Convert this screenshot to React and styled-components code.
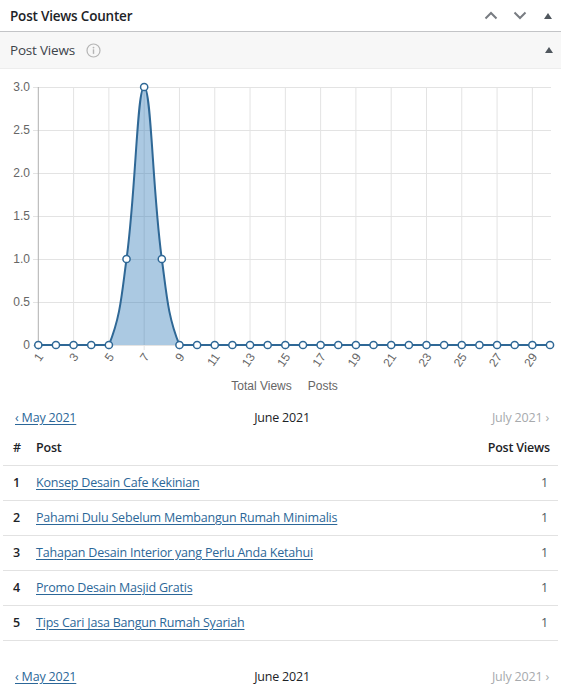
import React from "react";
import styled, { createGlobalStyle } from "styled-components";

const Global = createGlobalStyle`
  html, body { margin: 0; padding: 0; background: #fff; }
  body { font-family: "Open Sans", "Noto Sans", Arial, sans-serif; color: #1d2327; }
  * { box-sizing: border-box; }
`;

const Panel = styled.div`
  width: 561px;
  background: #fff;
`;

const TopBar = styled.div`
  display: flex;
  align-items: center;
  height: 32px;
  padding: 0 0 0 10px;
  border-bottom: 1px solid #c3c4c7;
`;

const Title = styled.h2`
  flex: 1;
  margin: 0;
  font-size: 13.5px;
  font-weight: 600;
  color: #1d2327;
  letter-spacing: -0.2px;
`;

const Tools = styled.div`
  display: flex;
  align-items: center;
`;

const ToolBtn = styled.span`
  display: flex;
  align-items: center;
  justify-content: center;
  width: ${(p) => p.$w || 29}px;
  height: 24px;
  color: #787c82;
`;

const SubBar = styled.div`
  display: flex;
  align-items: center;
  height: 37px;
  padding: 0 4px 0 10px;
  background: #f7f7f7;
  border-bottom: 1px solid #ededed;
`;

const SubTitle = styled.h3`
  margin: 0;
  font-size: 13.5px;
  font-weight: 400;
  color: #3c434a;
  letter-spacing: -0.2px;
`;

const Spacer = styled.div`
  flex: 1;
`;

const InfoIcon = styled.span`
  display: inline-flex;
  margin-left: 11px;
  color: #b5b5b5;
`;

const ChartBox = styled.div`
  display: flex;
  flex-direction: column;
  padding-top: 1px;
`;

const Legend = styled.div`
  display: flex;
  justify-content: center;
  gap: 16px;
  height: 22px;
  align-items: center;
  margin-left: 8px;
  font-family: "Liberation Sans", Arial, sans-serif;
  font-size: 12px;
  color: #666;
`;

const Nav = styled.div`
  display: grid;
  grid-template-columns: 1fr auto 1fr;
  align-items: center;
  height: 20px;
  padding: 0 12px 0 15px;
  margin-top: ${(p) => p.$mt}px;
  font-size: 12.5px;
  letter-spacing: -0.2px;
`;

const NavLink = styled.a`
  color: #2c6798;
  text-decoration: underline;
  text-underline-offset: 2px;
  justify-self: start;
`;

const NavCurrent = styled.span`
  color: #1d2327;
`;

const NavDisabled = styled.span`
  color: #a7aaad;
  justify-self: end;
`;

const Table = styled.table`
  width: 555px;
  margin: 3px 3px 0;
  border-collapse: collapse;
  font-size: 12.5px;
  letter-spacing: -0.2px;
`;

const Th = styled.th`
  text-align: ${(p) => p.$align || "left"};
  font-weight: 600;
  color: #1d2327;
  height: 35px;
  padding: 0 ${(p) => (p.$align === "right" ? 8 : 0)}px 0 ${(p) => p.$pl || 0}px;
  border-bottom: 1px solid #e2e2e2;
  width: ${(p) => (p.$w ? p.$w + "px" : "auto")};
`;

const Td = styled.td`
  height: 35px;
  text-align: ${(p) => p.$align || "left"};
  padding: 0 ${(p) => (p.$align === "right" ? 10 : 0)}px 0 ${(p) => p.$pl || 0}px;
  border-bottom: 1px solid #e2e2e2;
  font-weight: ${(p) => (p.$bold ? 600 : 400)};
  color: ${(p) => (p.$muted ? "#50575e" : "#1d2327")};
`;

const PostLink = styled.a`
  color: #2c6798;
  text-decoration: underline;
  text-underline-offset: 2px;
`;

const posts = [
  "Konsep Desain Cafe Kekinian",
  "Pahami Dulu Sebelum Membangun Rumah Minimalis",
  "Tahapan Desain Interior yang Perlu Anda Ketahui",
  "Promo Desain Masjid Gratis",
  "Tips Cari Jasa Bangun Rumah Syariah",
];

const data = Array.from({ length: 30 }, (_, i) => {
  const d = i + 1;
  if (d === 6 || d === 8) return 1;
  if (d === 7) return 3;
  return 0;
});

const X0 = 38.3;
const DX = 17.645;
const YB = 275;
const YT = 17;
const PER = (YB - YT) / 3;

const px = (i) => X0 + i * DX;
const py = (v) => YB - v * PER;

function buildPath() {
  const pts = data.map((v, i) => ({ x: px(i), y: py(v) }));
  const t = 0.4;
  const cps = pts.map((cur, i) => {
    const prev = pts[i - 1] || cur;
    const next = pts[i + 1] || cur;
    const d01 = Math.hypot(cur.x - prev.x, cur.y - prev.y);
    const d12 = Math.hypot(next.x - cur.x, next.y - cur.y);
    const s01 = d01 / (d01 + d12 || 1);
    const s12 = d12 / (d01 + d12 || 1);
    const fa = t * s01;
    const fb = t * s12;
    const clamp = (y) => Math.max(YT, Math.min(YB, y));
    return {
      p: { x: cur.x - fa * (next.x - prev.x), y: clamp(cur.y - fa * (next.y - prev.y)) },
      n: { x: cur.x + fb * (next.x - prev.x), y: clamp(cur.y + fb * (next.y - prev.y)) },
    };
  });
  let d = `M${pts[0].x},${pts[0].y}`;
  for (let i = 1; i < pts.length; i++) {
    const a = cps[i - 1].n;
    const b = cps[i].p;
    d += ` C${a.x.toFixed(2)},${a.y.toFixed(2)} ${b.x.toFixed(2)},${b.y.toFixed(2)} ${pts[i].x.toFixed(2)},${pts[i].y.toFixed(2)}`;
  }
  return { d, pts };
}

function Chart() {
  const { d, pts } = buildPath();
  const last = pts[pts.length - 1];
  const area = `${d} L${last.x},${YB} L${pts[0].x},${YB} Z`;
  const yTicks = [0, 0.5, 1, 1.5, 2, 2.5, 3];
  const xTicks = [];
  for (let day = 1; day <= 29; day += 2) xTicks.push(day);
  return (
    <svg width="561" height="305" viewBox="0 0 561 305">
      {yTicks.map((v) => (
        <line key={"h" + v} x1="33" x2="551" y1={py(v) + 0.5} y2={py(v) + 0.5} stroke="#e3e3e3" strokeWidth="1" />
      ))}
      {xTicks.map((day) => (
        <line key={"v" + day} x1={px(day - 1)} x2={px(day - 1)} y1={YT} y2={YB + 5} stroke={day === 1 ? "#b0b0b0" : "#e3e3e3"} strokeWidth="1" />
      ))}
      {yTicks.map((v) => (
        <text key={"yl" + v} x="30" y={py(v) + 4} textAnchor="end" fontSize="12" fill="#666" fontFamily="Liberation Sans, Arial, sans-serif">
          {v === 0 ? "0" : v.toFixed(1)}
        </text>
      ))}
      {xTicks.map((day) => {
        const x = px(day - 1) + 3;
        const y = 285;
        return (
          <text key={"xl" + day} x={x} y={y} textAnchor="end" dominantBaseline="middle" fontSize="12" fill="#666" fontFamily="Liberation Sans, Arial, sans-serif" transform={`rotate(-55 ${x} ${y})`}>
            {day}
          </text>
        );
      })}
      <path d={area} fill="rgba(46,120,182,0.4)" />
      <path d={d} fill="none" stroke="#2f6896" strokeWidth="2" />
      {pts.map((p, i) => (
        <circle key={i} cx={p.x} cy={p.y} r="3.6" fill="#fff" stroke="#2f6896" strokeWidth="1.5" />
      ))}
    </svg>
  );
}

const Chevron = ({ up }) => (
  <svg width="14" height="9" viewBox="0 0 14 9">
    <path d={up ? "M1.5 7.5 L7 2 L12.5 7.5" : "M1.5 1.5 L7 7 L12.5 1.5"} fill="none" stroke="currentColor" strokeWidth="2" />
  </svg>
);

const Tri = () => (
  <svg width="8" height="6" viewBox="0 0 8 6">
    <path d="M0 6 L4 0 L8 6 Z" fill="#50575e" />
  </svg>
);

export default function App() {
  return (
    <>
      <Global />
      <Panel>
        <TopBar>
          <Title>Post Views Counter</Title>
          <Tools>
            <ToolBtn $w={28}><Chevron up /></ToolBtn>
            <ToolBtn $w={30}><Chevron /></ToolBtn>
            <ToolBtn $w={26}><Tri /></ToolBtn>
          </Tools>
        </TopBar>
        <SubBar>
          <SubTitle>Post Views</SubTitle>
          <InfoIcon>
            <svg width="15" height="15" viewBox="0 0 15 15">
              <circle cx="7.5" cy="7.5" r="6.5" fill="none" stroke="currentColor" strokeWidth="1.2" />
              <circle cx="7.5" cy="4.6" r="0.9" fill="currentColor" />
              <rect x="6.8" y="6.3" width="1.4" height="4.6" fill="currentColor" />
            </svg>
          </InfoIcon>
          <Spacer />
          <ToolBtn $w={16}><Tri /></ToolBtn>
        </SubBar>
        <ChartBox>
          <Chart />
          <Legend>
            <span>Total Views</span>
            <span>Posts</span>
          </Legend>
        </ChartBox>
        <Nav $mt={10}>
          <NavLink href="#">‹ May 2021</NavLink>
          <NavCurrent>June 2021</NavCurrent>
          <NavDisabled>July 2021 ›</NavDisabled>
        </Nav>
        <Table>
          <thead>
            <tr>
              <Th $w={33} $pl={10}>#</Th>
              <Th>Post</Th>
              <Th $align="right">Post Views</Th>
            </tr>
          </thead>
          <tbody>
            {posts.map((p, i) => (
              <tr key={p}>
                <Td $pl={10} $bold>{i + 1}</Td>
                <Td><PostLink href="#">{p}</PostLink></Td>
                <Td $align="right" $muted>1</Td>
              </tr>
            ))}
          </tbody>
        </Table>
        <Nav $mt={26}>
          <NavLink href="#">‹ May 2021</NavLink>
          <NavCurrent>June 2021</NavCurrent>
          <NavDisabled>July 2021 ›</NavDisabled>
        </Nav>
      </Panel>
    </>
  );
}
